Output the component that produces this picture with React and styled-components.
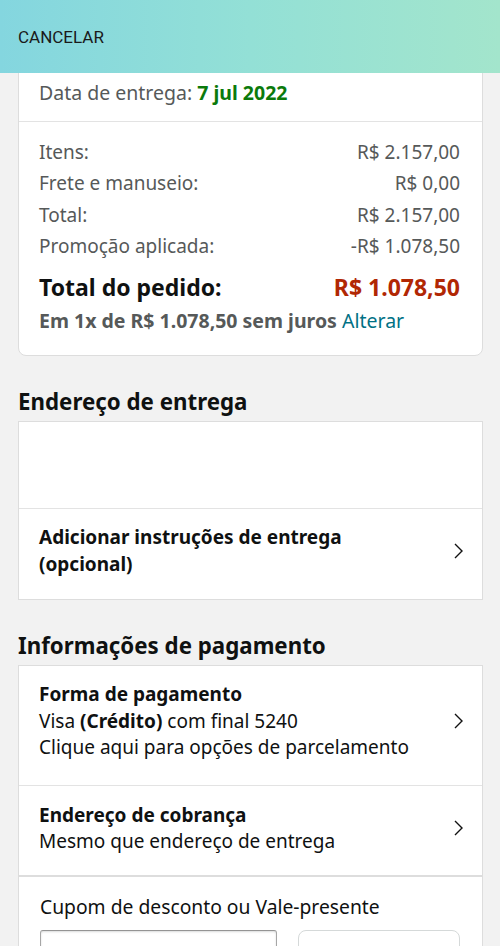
import React from "react";
import styled, { createGlobalStyle } from "styled-components";

const GlobalStyle = createGlobalStyle`
  body {
    margin: 0;
    background: #f2f2f2;
    font-family: "Noto Sans", "Open Sans", Arial, sans-serif;
    color: #0f1111;
  }
  * { box-sizing: border-box; }
`;

const Header = styled.div`
  position: fixed;
  top: 0;
  left: 0;
  right: 0;
  height: 73px;
  z-index: 10;
  display: flex;
  align-items: center;
  padding-left: 18px;
  background: linear-gradient(90deg, #84d6df 0%, #93e0d6 50%, #a3e5cc 100%);
  font-family: Roboto, Arial, sans-serif;
  font-size: 17px;
  color: #1a1a1a;
`;

const Page = styled.div`
  padding: 30px 17px 0 18px;
  display: flex;
  flex-direction: column;
`;

const Card = styled.div`
  background: #fff;
  border: 1px solid #dddddd;
  border-radius: ${(p) => (p.$rounded ? "8px" : "0")};
`;

const Block = styled.div`
  padding: ${(p) => p.$pad || "0 22px 0 20px"};
  border-top: ${(p) => (p.$divider ? "1px solid #e3e3e3" : "none")};
`;

const Line = styled.div`
  margin-bottom: ${(p) => p.$gap || "0"};
  font-size: 19.5px;
  line-height: 27px;
  color: #565959;
  white-space: nowrap;
  overflow: hidden;
`;

const Green = styled.span`
  color: #0b7a0b;
  font-weight: 700;
`;

const SumRow = styled.div`
  display: flex;
  justify-content: space-between;
  align-items: center;
  font-size: 19px;
  line-height: 31.3px;
  color: #565959;
`;

const TotalRow = styled.div`
  display: flex;
  justify-content: space-between;
  align-items: center;
  margin-top: 10px;
  font-size: 23px;
  line-height: 30px;
  font-weight: 700;
  color: #0f1111;
`;

const Price = styled.span`
  color: #b12704;
`;

const Installment = styled.div`
  margin-top: 4px;
  font-size: 19.5px;
  line-height: 30px;
  font-weight: 700;
  color: #565959;
  white-space: nowrap;
`;

const Link = styled.span`
  color: #007185;
  font-weight: 400;
`;

const SectionTitle = styled.h2`
  margin: ${(p) => p.$margin};
  font-size: 22.3px;
  line-height: 30px;
  font-weight: 700;
  color: #0f1111;
`;

const Blank = styled.div`
  height: 86px;
`;

const NavRow = styled.div`
  display: flex;
  align-items: center;
  justify-content: space-between;
  padding: ${(p) => p.$pad};
  border-top: ${(p) => (p.$divider ? "1px solid #e3e3e3" : "none")};
`;

const NavText = styled.div`
  font-size: 19px;
  line-height: ${(p) => p.$lh || "26.5px"};
  color: #0f1111;
  white-space: nowrap;
`;

const Bold = styled.div`
  font-weight: 700;
`;

const Strong = styled.span`
  font-weight: 700;
`;

const Chevron = styled.svg`
  flex: none;
  width: 12px;
  height: 18px;
`;

const CouponLabel = styled.div`
  font-size: 19.3px;
  line-height: 26px;
  color: #0f1111;
`;

const CouponInputs = styled.div`
  margin-top: 10px;
  display: flex;
  justify-content: space-between;
  gap: 21px;
`;

const Input = styled.div`
  width: 239px;
  height: 40px;
  border: 1px solid #a6a6a6;
  border-top-color: #949494;
  border-radius: 3px;
  box-shadow: inset 0 1px 2px rgba(15, 17, 17, 0.15);
`;

const Button = styled.div`
  width: 164px;
  height: 40px;
  border: 1px solid #d5d9d9;
  border-radius: 8px;
  background: #fff;
`;

function ChevronIcon() {
  return (
    <Chevron viewBox="0 0 12 18">
      <path d="M3 2 L10 9 L3 16" fill="none" stroke="#111" strokeWidth="1.4" />
    </Chevron>
  );
}

const summary = [
  ["Itens:", "R$ 2.157,00"],
  ["Frete e manuseio:", "R$ 0,00"],
  ["Total:", "R$ 2.157,00"],
  ["Promoção aplicada:", "-R$ 1.078,50"],
];

export default function App() {
  return (
    <>
      <GlobalStyle />
      <Header>CANCELAR</Header>
      <Page>
        <Card $rounded>
          <Block $pad="14px 22px 15px 20px">
            <Line $gap="7px">Enviado pela Amazon, quinta-feira, 7 de jul.</Line>
            <Line>
              Data de entrega: <Green>7 jul 2022</Green>
            </Line>
          </Block>
          <Block $divider $pad="15px 22px 19px 20px">
            {summary.map(([label, value]) => (
              <SumRow key={label}>
                <span>{label}</span>
                <span>{value}</span>
              </SumRow>
            ))}
            <TotalRow>
              <span>Total do pedido:</span>
              <Price>R$ 1.078,50</Price>
            </TotalRow>
            <Installment>
              Em 1x de R$ 1.078,50 sem juros <Link>Alterar</Link>
            </Installment>
          </Block>
        </Card>

        <SectionTitle $margin="31px 0 4px">Endereço de entrega</SectionTitle>
        <Card>
          <Blank />
          <NavRow $divider $pad="15px 18px 21px 20px">
            <NavText $lh="27px">
              <Bold>Adicionar instruções de entrega</Bold>
              <Bold>(opcional)</Bold>
            </NavText>
            <ChevronIcon />
          </NavRow>
        </Card>

        <SectionTitle $margin="31px 0 4px">Informações de pagamento</SectionTitle>
        <Card>
          <NavRow $pad="15px 18px 24px 20px">
            <NavText>
              <Bold>Forma de pagamento</Bold>
              <div>
                Visa <Strong>(Crédito)</Strong> com final 5240
              </div>
              <div>Clique aqui para opções de parcelamento</div>
            </NavText>
            <ChevronIcon />
          </NavRow>
          <NavRow $divider $pad="16px 18px 20px 20px">
            <NavText>
              <Bold>Endereço de cobrança</Bold>
              <div>Mesmo que endereço de entrega</div>
            </NavText>
            <ChevronIcon />
          </NavRow>
        </Card>
        <Card>
          <Block $pad="17px 22px 20px 21px">
            <CouponLabel>Cupom de desconto ou Vale-presente</CouponLabel>
            <CouponInputs>
              <Input />
              <Button />
            </CouponInputs>
          </Block>
        </Card>
      </Page>
    </>
  );
}
